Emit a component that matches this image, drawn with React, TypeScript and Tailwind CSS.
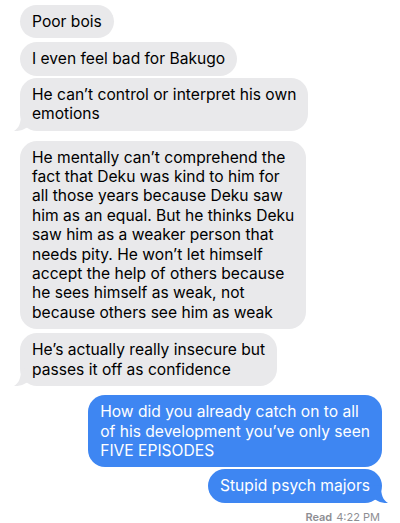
import React from "react";

type Msg = {
  lines: string[];
  me?: boolean;
  tail?: boolean;
  mt: string;
};

const messages: Msg[] = [
  { lines: ["Poor bois"], mt: "mt-[5px]" },
  { lines: ["I even feel bad for Bakugo"], mt: "mt-[4px]" },
  { lines: ["He can\u2019t control or interpret his own", "emotions"], tail: true, mt: "mt-[2px]" },
  {
    lines: [
      "He mentally can\u2019t comprehend the",
      "fact that Deku was kind to him for",
      "all those years because Deku saw",
      "him as an equal. But he thinks Deku",
      "saw him as a weaker person that",
      "needs pity. He won\u2019t let himself",
      "accept the help of others because",
      "he sees himself as weak, not",
      "because others see him as weak",
    ],
    mt: "mt-[10px]",
  },
  { lines: ["He\u2019s actually really insecure but", "passes it off as confidence"], tail: true, mt: "mt-[4px]" },
  {
    lines: ["How did you already catch on to all", "of his development you\u2019ve only seen", "FIVE EPISODES"],
    me: true,
    mt: "mt-[9px]",
  },
  { lines: ["Stupid psych majors"], me: true, tail: true, mt: "mt-[2px]" },
];

function Tail({ me }: { me?: boolean }) {
  if (me) {
    return (
      <svg
        width="16"
        height="18"
        viewBox="0 0 16 18"
        className="absolute right-[-6px] bottom-0"
      >
        <path d="M9 1 C9 10 11 15 16 18 C11 18.4 7 17 4 15 L1 14 L1 0 Z" fill="#3e86f2" />
      </svg>
    );
  }
  return (
    <svg width="16" height="18" viewBox="0 0 16 18" className="absolute left-[-6px] bottom-0">
      <path d="M7 1 C7 10 5 15 0 18 C5 18.4 9 17 12 15 L15 14 L15 0 Z" fill="#e9e9eb" />
    </svg>
  );
}

export default function App() {
  return (
    <div
      className="w-[400px] h-[523px] bg-white flex flex-col pl-[20px] pr-[18px] overflow-hidden"
      style={{ fontFamily: 'Inter, "Liberation Sans", Arial, sans-serif' }}
    >
      {messages.map((m, i) => (
        <div key={i} className={`flex ${m.me ? "justify-end" : "justify-start"} ${m.mt}`}>
          <div
            className={`relative rounded-[17px] px-[12px] py-[7px] text-[15.6px] leading-[19.4px] ${
              m.me ? "bg-[#3e86f2] text-white" : "bg-[#e9e9eb] text-black"
            }`}
          >
            {m.tail && <Tail me={m.me} />}
            <div className="relative">
              {m.lines.map((l, j) => (
                <div key={j} className="whitespace-nowrap">
                  {l}
                </div>
              ))}
            </div>
          </div>
        </div>
      ))}
      <div className="flex justify-end mt-[8px] pr-[2px] text-[11px] leading-[13px] text-[#8e8e93]">
        <span className="font-semibold">Read</span>
        <span className="ml-[4px]">4:22 PM</span>
      </div>
    </div>
  );
}
